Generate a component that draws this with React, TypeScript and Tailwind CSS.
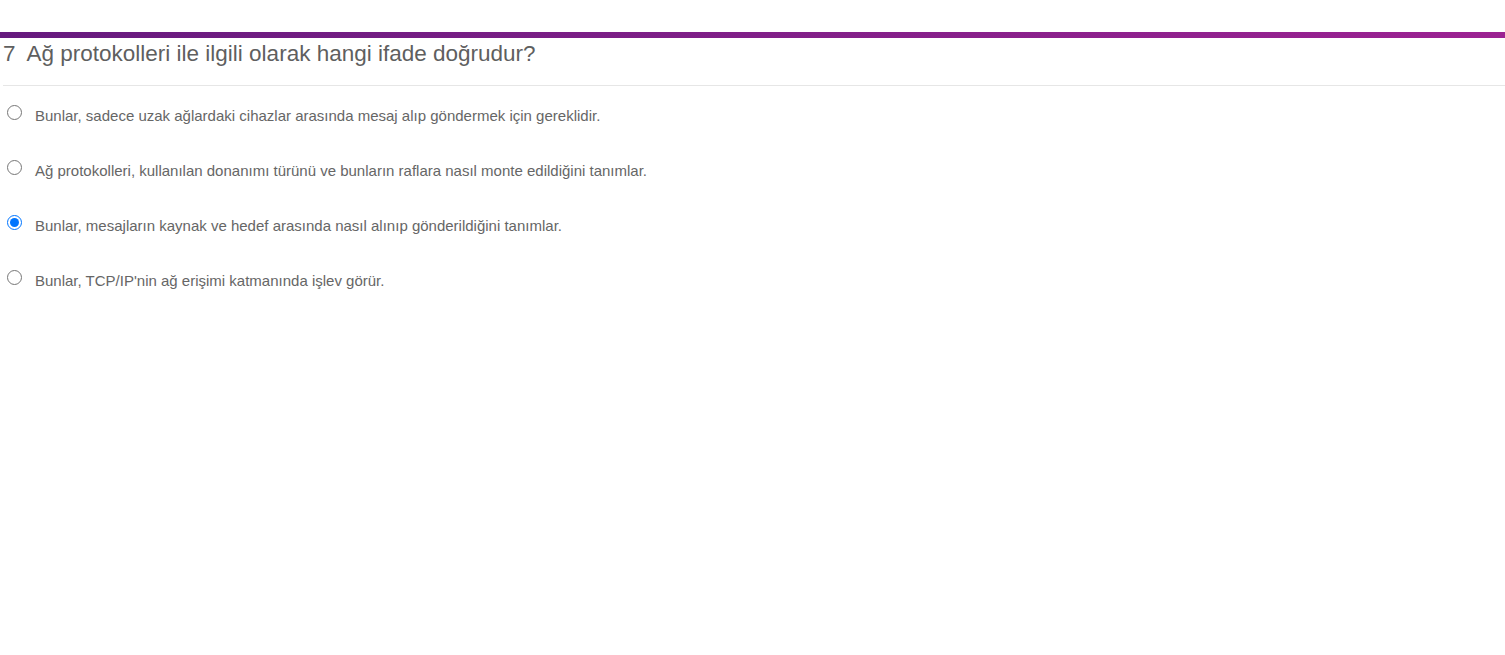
import React from "react";

const options = [
  "Bunlar, sadece uzak ağlardaki cihazlar arasında mesaj alıp göndermek için gereklidir.",
  "Ağ protokolleri, kullanılan donanımı türünü ve bunların raflara nasıl monte edildiğini tanımlar.",
  "Bunlar, mesajların kaynak ve hedef arasında nasıl alınıp gönderildiğini tanımlar.",
  "Bunlar, TCP/IP'nin ağ erişimi katmanında işlev görür.",
];

export default function App() {
  return (
    <div className="min-h-[655px] bg-white pt-[32px] font-['Liberation_Sans',Arial,sans-serif]">
      <div className="h-[6px] bg-gradient-to-r from-[#661a7e] to-[#9c2292]" />
      <div className="pl-[3px]">
        <h2 className="flex h-[48px] items-start border-b border-[#e6e6e6] pt-[5px] text-[22.5px] leading-none text-[#5f5f5f]">
          <span>7</span>
          <span className="ml-[11px]">Ağ protokolleri ile ilgili olarak hangi ifade doğrudur?</span>
        </h2>
        <div className="pt-[16px]">
          {options.map((text, i) => (
            <label key={i} className="flex h-[55px] items-start gap-[13px] pl-[4px] text-[15px] leading-[1.5] text-[#666]">
              <input
                type="radio"
                name="q7"
                defaultChecked={i === 2}
                className="mt-[3px] h-[15px] w-[15px]"
              />
              <span className="mt-[3px]">{text}</span>
            </label>
          ))}
        </div>
      </div>
    </div>
  );
}
